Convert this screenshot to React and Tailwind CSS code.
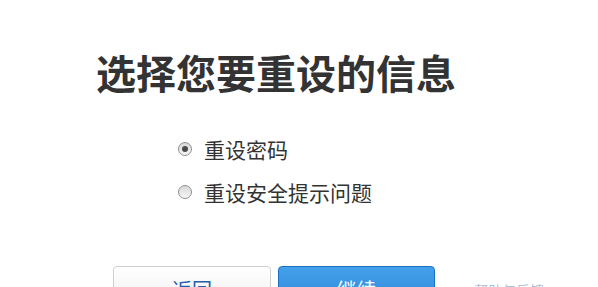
import React, { useState } from "react";

const OPTIONS = ["重设密码", "重设安全提示问题"];

function Radio({ checked }) {
  return (
    <span className="relative inline-flex h-[14px] w-[14px] shrink-0 items-center justify-center rounded-full border border-[#8f8f8f] bg-gradient-to-b from-[#d8d8d8] to-[#f7f7f7]">
      {checked && <span className="h-[6px] w-[6px] rounded-full bg-[#4a4a4a]" />}
    </span>
  );
}

export default function App() {
  const [choice, setChoice] = useState(0);

  return (
    <div
      className="h-[287px] w-full overflow-hidden bg-white"
      style={{ fontFamily: '"Noto Sans CJK SC", "Noto Sans", sans-serif' }}
    >
      <div className="pl-[96px] pt-[46px]">
        <h1 className="text-[40px] font-bold leading-[52px] text-[#333333]">
          选择您要重设的信息
        </h1>

        {/* Options */}
        <div className="mt-[37px] flex flex-col gap-[15px] pl-[82px]">
          {OPTIONS.map((label, i) => (
            <label
              key={label}
              className="flex h-[28px] cursor-pointer items-center gap-[12px] text-[21px] text-[#333333]"
              onClick={() => setChoice(i)}
            >
              <Radio checked={choice === i} />
              <span className="leading-[28px]">{label}</span>
            </label>
          ))}
        </div>

        {/* Actions */}
        <div className="mt-[60px] flex items-start gap-[7px] pl-[17px]">
          <button className="h-[48px] w-[158px] rounded-[4px] border border-[#cfcfcf] bg-gradient-to-b from-white to-[#ececec] text-[20px] leading-[44px] text-[#1f5fae]">
            返回
          </button>
          <button className="h-[48px] w-[157px] rounded-[4px] border border-[#1c6fc2] bg-gradient-to-b from-[#43a0ea] to-[#2b86d6] text-[20px] leading-[44px] text-white">
            继续
          </button>
          <span className="ml-[15px] mt-[14px] text-[14px] leading-[20px] text-[#a9c2d6]">
            • 帮助与反馈
          </span>
        </div>
      </div>
    </div>
  );
}
